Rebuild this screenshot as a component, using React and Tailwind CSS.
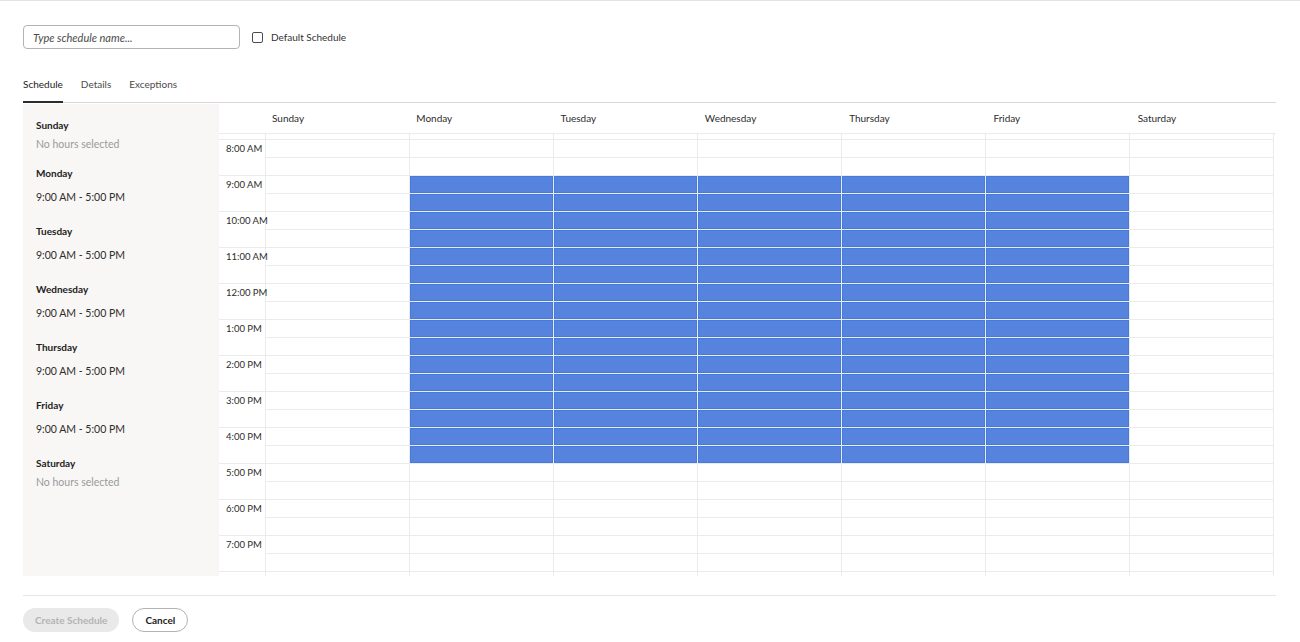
import React from 'react';

const days = ['Sunday', 'Monday', 'Tuesday', 'Wednesday', 'Thursday', 'Friday', 'Saturday'];

const summary = [
  { day: 'Sunday', hours: null },
  { day: 'Monday', hours: '9:00 AM - 5:00 PM' },
  { day: 'Tuesday', hours: '9:00 AM - 5:00 PM' },
  { day: 'Wednesday', hours: '9:00 AM - 5:00 PM' },
  { day: 'Thursday', hours: '9:00 AM - 5:00 PM' },
  { day: 'Friday', hours: '9:00 AM - 5:00 PM' },
  { day: 'Saturday', hours: null },
];

// 7 AM and 8 PM rows are only partly scrolled into view
const hours = [7, 8, 9, 10, 11, 12, 13, 14, 15, 16, 17, 18, 19, 20];

const label = (h) => {
  if (h === 7 || h === 20) return '';
  const suffix = h < 12 ? 'AM' : 'PM';
  const v = h % 12 === 0 ? 12 : h % 12;
  return `${v}:00 ${suffix}`;
};

// Mon-Fri, 9:00 to 17:00
const isOn = (dayIdx, h) => dayIdx >= 1 && dayIdx <= 5 && h >= 9 && h < 17;

const HalfCell = ({ on }) => (
  <div className="h-[18px] border-b border-[#ebebeb] relative">
    {on && (
      <div className="absolute inset-0 bg-[#5583de] border border-[#3f78e0]/70" />
    )}
  </div>
);

const App = () => {
  return (
    <div className="w-[1300px] h-[642px] bg-white border-t border-[#e3e3e3] font-['Lato',sans-serif] text-[#2c2c2c] overflow-hidden">
      <div className="pl-[23px] pr-[24px]">
        {/* name + default */}
        <div className="flex items-center pt-[24px] h-[48px]">
          <input
            placeholder="Type schedule name..."
            className="w-[217px] h-[24px] border border-[#b3b3b3] rounded-[4px] pl-[9px] text-[11px] italic placeholder:text-[#4b4b4b] outline-none"
          />
          <label className="flex items-center ml-[12px] gap-[8px] text-[10px] text-[#323232]">
            <span className="w-[11px] h-[11px] border-[1.5px] border-[#4b4b4b] rounded-[2px]" />
            Default Schedule
          </label>
        </div>

        {/* tabs */}
        <div className="mt-[28px] flex border-b border-[#d6d6d6] text-[10px]">
          <div className="pb-[9px] border-b-2 border-[#2c2c2c] -mb-px text-[#222]">Schedule</div>
          <div className="pb-[9px] ml-[18px] text-[#4b4b4b]">Details</div>
          <div className="pb-[9px] ml-[18px] text-[#4b4b4b]">Exceptions</div>
        </div>

        {/* body */}
        <div className="mt-[1px] flex h-[472px]">
          <div className="w-[196px] bg-[#f8f7f5] pl-[13px] pt-[14px]">
            {summary.map((s) => (
              <div key={s.day} className={s.hours ? 'h-[58px]' : 'h-[48px]'}>
                <div className="text-[10px] font-bold text-[#222] leading-[14px]">{s.day}</div>
                {s.hours ? (
                  <div className="mt-[10px] text-[10.5px] text-[#2c2c2c] leading-[14px]">{s.hours}</div>
                ) : (
                  <div className="mt-[5px] text-[10.5px] text-[#9a9a9a] leading-[14px]">No hours selected</div>
                )}
              </div>
            ))}
          </div>

          <div className="w-[1057px] flex flex-col">
            <div className="h-[30px] flex border-b border-[#ebebeb] shrink-0">
              <div className="w-[47px]" />
              {days.map((d) => (
                <div key={d} className="flex-1 pl-[6px] pt-[7px] text-[10px] text-[#2c2c2c]">{d}</div>
              ))}
            </div>
            <div className="flex-1 overflow-hidden border-r border-[#ebebeb] mr-[2px]">
              <div className="-mt-[30px]">
                {hours.map((h) => (
                  <div key={h} className="flex">
                    <div className="w-[47px] h-[36px] border-r border-b border-[#ebebeb] pl-[7px] pt-[2px] text-[9.5px] text-[#2c2c2c] whitespace-nowrap">
                      {label(h)}
                    </div>
                    {days.map((d, i) => (
                      <div key={d} className={`flex-1 ${i < 6 ? 'border-r border-[#ebebeb]' : ''}`}>
                        <HalfCell on={isOn(i, h)} />
                        <HalfCell on={isOn(i, h)} />
                      </div>
                    ))}
                  </div>
                ))}
              </div>
            </div>
          </div>
        </div>

        {/* footer */}
        <div className="mt-[19px] border-t border-[#e6e6e6] pt-[12px] flex gap-[13px]">
          <button className="h-[24px] px-[12px] rounded-full bg-[#e9e9e9] text-[#b3b3b3] text-[10px] font-bold">
            Create Schedule
          </button>
          <button className="h-[24px] px-[12px] rounded-full border border-[#b3b3b3] text-[#222] text-[10px] font-bold">
            Cancel
          </button>
        </div>
      </div>
    </div>
  );
};

export default App;
